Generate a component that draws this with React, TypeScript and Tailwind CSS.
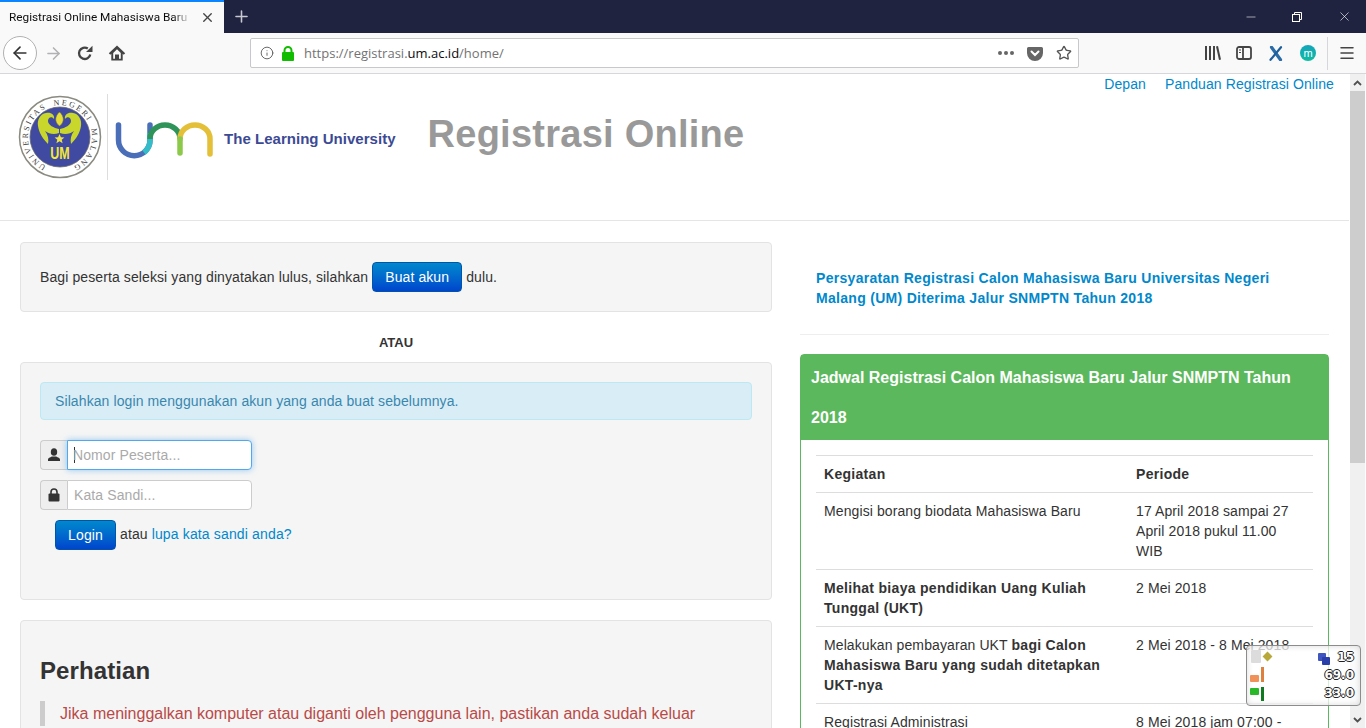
import React from "react";
import { ArrowLeft, ArrowRight, Plus, X, Minus, Star, Menu, Info } from "lucide-react";

const ReloadIcon = () => (
  <svg width="16" height="16" viewBox="0 0 16 16" fill="none">
    <path d="M13.300 9.500A5.700 5.700 0 1 1 10.800 3.500" stroke="#444" strokeWidth="2.300" />
    <path d="M9 7h6.500V.8z" fill="#444" />
  </svg>
);

const HomeIcon = () => (
  <svg width="18" height="18" viewBox="0 0 18 18">
    <path d="M9 1.500.8 9.200l1.500 1.500 1-.9V16.500h11.400V9.800l1 .9 1.500-1.500z" fill="#444" />
    <path d="M9 5.300 12.800 8.900V14.700H11V10.600H7V14.700H5.200V8.900z" fill="#f9f9fa" />
  </svg>
);

const LockIcon = () => (
  <svg width="14" height="15" viewBox="0 0 14 15">
    <rect x="1" y="6" width="12" height="9" rx="1" fill="#12bc00" />
    <path d="M3.500 7V4.500a3.500 3.500 0 0 1 7 0V7" fill="none" stroke="#12bc00" strokeWidth="2" />
  </svg>
);

const PocketIcon = () => (
  <svg width="16" height="15" viewBox="0 0 16 15">
    <path d="M1.500 1h13A1.500 1.500 0 0 1 16 2.500V7A8 8 0 0 1 0 7V2.500A1.500 1.500 0 0 1 1.500 1z" fill="#666" />
    <path d="M4.500 5.500 8 9l3.500-3.500" fill="none" stroke="#fff" strokeWidth="2" strokeLinecap="round" />
  </svg>
);

const LibraryIcon = () => (
  <svg width="16" height="14" viewBox="0 0 16 14" fill="#444">
    <rect x="0" y="0" width="2" height="14" />
    <rect x="4" y="0" width="2" height="14" />
    <rect x="8" y="0" width="2" height="14" />
    <path d="m11 .5 2-.5 3 13.500-2 .5z" />
  </svg>
);

const SidebarIcon = () => (
  <svg width="16" height="14" viewBox="0 0 16 14" fill="none" stroke="#444" strokeWidth="1.800">
    <rect x="1" y="1" width="14" height="12" rx="2" />
    <path d="M7 1v12" />
    <path d="M3 4h2M3 6.500h2" strokeWidth="1.200" />
  </svg>
);

const ExtensionX = () => (
  <svg width="14" height="15" viewBox="0 0 14 15" fill="none" strokeLinecap="round">
    <path d="M2.500 1.200 11.500 13.800" stroke="#2a6ca8" strokeWidth="3.200" />
    <path d="M12 1.200 1.500 13.800" stroke="#1d5f9c" strokeWidth="2.200" />
  </svg>
);

const RestoreIcon = () => (
  <svg width="10" height="10" viewBox="0 0 10 10" fill="none" stroke="#fff" strokeWidth="1">
    <rect x="0.500" y="2.500" width="7" height="7" />
    <path d="M2.500 2.500v-2h7v7h-2" />
  </svg>
);

const UserGlyph = () => (
  <svg width="14" height="14" viewBox="0 0 14 14" fill="#333">
    <ellipse cx="7" cy="4" rx="3.200" ry="3.800" />
    <path d="M1 13v-1.500c0-1.500 2-2 3.800-3h4.400c1.800 1 3.800 1.500 3.800 3V13z" />
  </svg>
);

const LockGlyph = () => (
  <svg width="12" height="14" viewBox="0 0 12 14">
    <rect x="0.500" y="5.500" width="11" height="8" rx="1" fill="#333" />
    <path d="M3 6V4a3 3 0 0 1 6 0v2" fill="none" stroke="#333" strokeWidth="1.600" />
  </svg>
);

const wing = "M41 34C36 33 30 30 30 26 30 22 34 21 36 24 37 20 33 17 28 18 22 19 19 25 20 31 21 38 25 44 30 49 31 44 30 40 27 36 31 39 36 40 41 38Z";

const Seal = () => (
  <svg width="84" height="84" viewBox="0 0 84 84" className="shrink-0">
    <defs>
      <path id="sealRing" d="M28 71A32 32 0 1 1 56 71" />
    </defs>
    <circle cx="42" cy="42" r="40.500" fill="#fff" stroke="#8a8a80" strokeWidth="1.500" />
    <circle cx="42" cy="42" r="30" fill="#3f4aa0" stroke="#6b6b6b" strokeWidth="0.800" />
    <text fontSize="8" fill="#3a3a3a" letterSpacing="1.900" wordSpacing="3" fontFamily="'Liberation Serif', serif">
      <textPath href="#sealRing">UNIVERSITAS NEGERI MALANG</textPath>
    </text>
    <path d={wing} fill="#c9d62c" />
    <path d={wing} fill="#c9d62c" transform="matrix(-1 0 0 1 83 0)" />
    <path d="M41.500 17C46 21 47 27 41.500 31 36 27 37 21 41.500 17z" fill="#e6dc3c" stroke="#6f7a20" strokeWidth="0.500" />
    <path d="M41.500 39l1.400 3.300 3.500.2-2.700 2.300.9 3.400-3.100-1.900-3.100 1.900.9-3.400-2.700-2.300 3.500-.2z" fill="#ece44a" />
    <text transform="translate(42 64) scale(1 1.300)" textAnchor="middle" fontSize="12.500" fontWeight="700" fill="#f4e838" fontFamily="'Liberation Sans', sans-serif">UM</text>
  </svg>
);

const UmLogo = () => (
  <svg width="100" height="40" viewBox="0 0 100 40" fill="none" strokeWidth="5.500" strokeLinecap="round" className="shrink-0">
    <path d="M3.500 5V20A15.750 15.750 0 0 0 35 20V5" stroke="#4a6fb8" />
    <path d="M35 13V20A15.750 15.750 0 0 1 29 32.500" stroke="#34bcc8" strokeLinecap="butt" />
    <path d="M35 19A15 14 0 0 1 65 19" stroke="#2f9459" strokeLinecap="butt" />
    <path d="M65 19A15 14 0 0 1 95 19V34" stroke="#e3c038" />
    <path d="M65 19V33" stroke="#8cc94a" />
  </svg>
);

const rowBorder = "border-t border-[#ddd] align-top p-2 leading-5";

const App: React.FC = () => {
  return (
    <div className="relative flex h-[728px] w-[1366px] flex-col overflow-hidden bg-white font-['Liberation_Sans',sans-serif] text-sm text-[#333]">
      {/* tab strip */}
      <div className="flex h-[33px] shrink-0 bg-[#1f2340] text-white">
        <div className="flex w-[224px] items-center border-t-2 border-[#0a84ff] bg-[#f9f9fa] pl-[9px] pr-[9px] font-['Roboto',sans-serif] text-[11.800px] text-[#0c0c0d]">
          <span className="w-[182px] overflow-hidden whitespace-nowrap [mask-image:linear-gradient(to_right,black_90%,transparent)]">Registrasi Online Mahasiswa Baru Universitas</span>
          <X size={15} strokeWidth={2.200} className="ml-auto text-[#444]" />
        </div>
        <div className="flex w-[34px] items-center justify-center">
          <Plus size={19} strokeWidth={2} className="text-[#c8c8d0]" />
        </div>
        <div className="ml-auto flex items-center">
          <div className="flex w-[46px] justify-center"><Minus size={14} strokeWidth={1} /></div>
          <div className="flex w-[46px] justify-center"><RestoreIcon /></div>
          <div className="flex w-[46px] justify-center pl-[2px]"><X size={15} strokeWidth={1} /></div>
        </div>
      </div>

      {/* toolbar */}
      <div className="flex h-[41px] shrink-0 items-center border-b border-[#d7d7db] bg-[#f9f9fa] text-[#444]">
        <div className="ml-[3px] flex h-[34px] w-[34px] items-center justify-center rounded-full border border-[#b1b1b3] bg-white">
          <ArrowLeft size={20} strokeWidth={2} className="text-[#333]" />
        </div>
        <ArrowRight size={19} strokeWidth={2} className="ml-[7px] text-[#b1b1b3]" />
        <span className="ml-[14px]"><ReloadIcon /></span>
        <div className="ml-[15px]"><HomeIcon /></div>
        <div className="ml-[124px] flex h-[30px] w-[829px] items-center rounded-[2px] border border-[#c8c8ca] bg-white pl-[9px] pr-[6px] font-['Open_Sans',sans-serif] text-[13px] text-[#737373]">
          <Info size={14} strokeWidth={1.500} className="text-[#555]" />
          <span className="ml-[7px]"><LockIcon /></span>
          <span className="ml-[9px]">https://registrasi.<span className="text-[#0c0c0d]">um.ac.id</span>/home/</span>
          <div className="ml-auto flex items-center gap-[13px]">
            <span className="flex gap-[2px]">
              <i className="h-[4px] w-[4px] rounded-full bg-[#666]" />
              <i className="h-[4px] w-[4px] rounded-full bg-[#666]" />
              <i className="h-[4px] w-[4px] rounded-full bg-[#666]" />
            </span>
            <PocketIcon />
            <Star size={16} strokeWidth={2} className="text-[#555]" />
          </div>
        </div>
        <div className="ml-[126px]"><LibraryIcon /></div>
        <div className="ml-[15px]"><SidebarIcon /></div>
        <span className="ml-[17px] flex"><ExtensionX /></span>
        <span className="ml-[17px] flex h-4 w-4 items-center justify-center rounded-full bg-gradient-to-b from-[#14a4bc] to-[#10bca0] text-[11px] font-light leading-none text-white">m</span>
        <span className="ml-[11px] h-[33px] w-px bg-[#d7d7db]" />
        <Menu size={18} strokeWidth={2} className="ml-[10px] text-[#444]" />
      </div>

      {/* page area */}
      <div className="flex min-h-0 flex-1">
        <div className="min-w-0 flex-1 overflow-hidden tracking-[0.1px]">
          <header className="h-[147px] border-b border-[#e5e5e5]">
            <nav className="flex h-5 justify-end gap-[19px] pr-[15px] leading-5 text-[#0088cc]">
              <a>Depan</a>
              <a>Panduan Registrasi Online</a>
            </nav>
            <div className="flex items-center pl-[18px]">
              <Seal />
              <span className="ml-[5px] h-[86px] w-px bg-[#ddd]" />
              <span className="ml-[7px] mt-[6px]"><UmLogo /></span>
              <span className="ml-[9px] mt-[4px] text-[15px] font-bold tracking-[0.03px] text-[#3c4a94]">The Learning University</span>
              <h1 className="mb-[6px] ml-[32px] text-[38px] font-bold leading-10 tracking-[0.25px] text-[#999]">Registrasi Online</h1>
            </div>
          </header>

          <div className="flex gap-[28px] px-5 pt-[21px]">
            {/* left column */}
            <div className="w-[752px] shrink-0">
              <div className="flex h-[70px] items-center rounded border border-[#e3e3e3] bg-[#f5f5f5] pl-[19px]">
                Bagi peserta seleksi yang dinyatakan lulus, silahkan
                <button className="mx-1 h-[30px] w-[90px] rounded border border-[#0055aa] bg-gradient-to-b from-[#0088cc] to-[#0044cc] text-white">Buat akun</button>
                dulu.
              </div>
              <p className="flex h-[50px] items-center justify-center pt-[12px] text-[13px] font-bold tracking-normal text-[#333]">ATAU</p>

              <div className="h-[238px] rounded border border-[#e3e3e3] bg-[#f5f5f5] px-[19px] pt-[19px]">
                <div className="flex h-[38px] items-center rounded border border-[#bce8f1] bg-[#d9edf7] px-[14px] text-[#3a87ad]">
                  Silahkan login menggunakan akun yang anda buat sebelumnya.
                </div>
                <div className="mt-5 flex h-[30px] w-[212px]">
                  <span className="flex w-[27px] items-center justify-center rounded-l border border-r-0 border-[#ccc] bg-[#eee]"><UserGlyph /></span>
                  <div className="flex flex-1 items-center rounded-r border border-[#52a8ec] bg-white pl-[6px] text-[#aaa] shadow-[0_0_6px_rgba(82,168,236,0.6)]">
                    <span className="mr-[-2px] h-4 w-px bg-[#333]" />Nomor Peserta...
                  </div>
                </div>
                <div className="mt-[10px] flex h-[30px] w-[212px]">
                  <span className="flex w-[27px] items-center justify-center rounded-l border border-r-0 border-[#ccc] bg-[#eee]"><LockGlyph /></span>
                  <div className="flex flex-1 items-center rounded-r border border-[#ccc] bg-white pl-[6px] text-[#aaa]">Kata Sandi...</div>
                </div>
                <div className="mt-[10px] flex items-start pl-[15px]">
                  <button className="h-[30px] w-[61px] rounded border border-[#0055aa] bg-gradient-to-b from-[#0088cc] to-[#0044cc] text-white">Login</button>
                  <span className="ml-1 leading-[28px]">atau <a className="tracking-[0.15px] text-[#0088cc]">lupa kata sandi anda?</a></span>
                </div>
              </div>

              <div className="mt-5 h-[200px] rounded border border-[#e3e3e3] bg-[#f5f5f5] px-[19px] pt-[30px]">
                <h2 className="text-2xl font-bold leading-10 text-[#333]">Perhatian</h2>
                <blockquote className="mt-[10px] border-l-[5px] border-[#ccc] pl-[15px] text-base leading-[25px] tracking-normal text-[#b94a48]">
                  Jika meninggalkan komputer atau diganti oleh pengguna lain, pastikan anda sudah keluar
                </blockquote>
              </div>
            </div>

            {/* right column */}
            <div className="w-[529px] shrink-0">
              <div className="h-[93px] border-b border-[#eee] px-4 pt-[26px] font-bold leading-5 tracking-[0.3px] text-[#0088cc]">
                Persyaratan Registrasi Calon Mahasiswa Baru Universitas Negeri Malang (UM) Diterima Jalur SNMPTN Tahun 2018
              </div>
              <div className="mt-[19px] h-[500px] rounded border border-[#5cb85c]">
                <div className="bg-[#5cb85c] px-[10px] pb-[2px] pt-[3px] text-base font-bold leading-10 tracking-normal text-white">
                  Jadwal Registrasi Calon Mahasiswa Baru Jalur SNMPTN Tahun 2018
                </div>
                <div className="px-[15px] pt-[15px]">
                  <table className="w-full table-fixed border-collapse">
                    <colgroup><col className="w-[312px]" /><col /></colgroup>
                    <tbody>
                      <tr className="font-bold tracking-[0.3px]">
                        <td className={rowBorder}>Kegiatan</td>
                        <td className={rowBorder}>Periode</td>
                      </tr>
                      <tr>
                        <td className={rowBorder}>Mengisi borang biodata Mahasiswa Baru</td>
                        <td className={rowBorder}>17 April 2018 sampai 27 April 2018 pukul 11.00 WIB</td>
                      </tr>
                      <tr>
                        <td className={rowBorder + " font-bold tracking-[0.3px]"}>Melihat biaya pendidikan Uang Kuliah Tunggal (UKT)</td>
                        <td className={rowBorder}>2 Mei 2018</td>
                      </tr>
                      <tr>
                        <td className={rowBorder}>Melakukan pembayaran UKT <b className="tracking-[0.3px]">bagi Calon Mahasiswa Baru yang sudah ditetapkan UKT-nya</b></td>
                        <td className={rowBorder}>2 Mei 2018 - 8 Mei 2018</td>
                      </tr>
                      <tr>
                        <td className={rowBorder}>Registrasi Administrasi</td>
                        <td className={rowBorder}>8 Mei 2018 jam 07:00 -</td>
                      </tr>
                    </tbody>
                  </table>
                </div>
              </div>
            </div>
          </div>
        </div>

        {/* scrollbar */}
        <div className="flex w-[17px] shrink-0 flex-col border-x border-white bg-[#f0f0f0]">
          <div className="flex h-[17px] items-center justify-center">
            <svg width="9" height="6" viewBox="0 0 9 6" fill="none" stroke="#505050" strokeWidth="1.800"><path d="m1 5 3.500-3.500L8 5" /></svg>
          </div>
          <div className="h-[372px] bg-[#cdcdcd]" />
          <div className="mt-auto flex h-[17px] items-center justify-center">
            <svg width="9" height="6" viewBox="0 0 9 6" fill="none" stroke="#505050" strokeWidth="1.800"><path d="m1 1 3.500 3.500L8 1" /></svg>
          </div>
        </div>
      </div>

      {/* system monitor widget floating over the page */}
      <div className="absolute left-[1246px] top-[645px] h-[61px] w-[115px] rounded border border-[#8c8c8c] bg-white/75 shadow-[inset_0_0_6px_rgba(0,0,0,0.15)]">
        <div className="absolute right-[6px] top-[2px] text-right font-['DejaVu_Sans',sans-serif] text-xs font-bold leading-[18px] text-white [text-shadow:1px_0_0_#222,-1px_0_0_#222,0_1px_0_#222,0_-1px_0_#222]">
          <div>15</div>
          <div>69.0</div>
          <div>33.0</div>
        </div>
        <span className="absolute left-[17px] top-[7px] h-[7px] w-[7px] rotate-45 bg-[#b8a83a]" />
        <span className="absolute left-[4px] top-[4px] h-[13px] w-[10px] rounded-[1px] bg-[#dcdcdc]" />
        <span className="absolute left-[71px] top-[7px] h-[8px] w-[8px] rounded-[1px] bg-[#3f55c0]" />
        <span className="absolute left-[75px] top-[11px] h-[8px] w-[8px] rounded-[1px] bg-[#2b3fa8]" />
        <span className="absolute left-[3px] top-[29px] h-[7px] w-[9px] rounded-[1px] bg-[#f0915a]" />
        <span className="absolute left-[14px] top-[21px] h-[15px] w-[3px] bg-[#e0803e]" />
        <span className="absolute left-[3px] top-[42px] h-[7px] w-[9px] rounded-[1px] bg-[#28b828]" />
        <span className="absolute left-[14px] top-[41px] h-[14px] w-[3px] bg-[#0f7a20]" />
      </div>
    </div>
  );
};

export default App;
